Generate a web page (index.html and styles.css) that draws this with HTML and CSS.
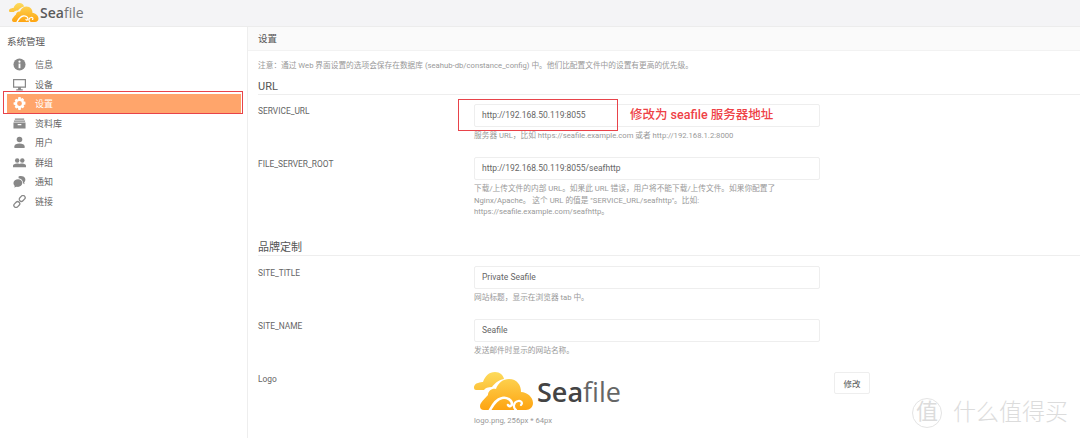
FILE: index.html
```html
<!DOCTYPE html>
<html lang="zh">
<head>
  <meta charset="UTF-8">
  <title>设置 - Seafile</title>
  <link rel="stylesheet" href="styles.css">
</head>
<body>
  <svg class="defs" width="0" height="0">
    <defs>
      <linearGradient id="cloud-back" x1="0" y1="0" x2="0" y2="1">
        <stop offset="0" stop-color="#fddb5c"/>
        <stop offset="1" stop-color="#fcc23a"/>
      </linearGradient>
      <linearGradient id="cloud-main" x1="0" y1="0" x2="0" y2="1">
        <stop offset="0" stop-color="#fdd04d"/>
        <stop offset="1" stop-color="#fea411"/>
      </linearGradient>
      <symbol id="cloud" viewBox="0 0 60 38">
        <path fill="url(#cloud-back)" d="M2 18C-1 18 -1 12 4 11C6 10 8 10 9 10C11 4 15 0 21 0C26 0 29 3 30 7C24 8 20 12 18 15C14 15 11 16 10 18Z"/>
        <path fill="url(#cloud-main)" d="M10 38C6 38 5 34 7 31C9 28 12 25 14 23C14 19 18 16 22 17C24 11 29 7 35 7C43 7 47 13 47 20C53 20 59 25 59 31C59 35 56 38 52 38Z"/>
        <path fill="none" stroke="#fff" stroke-width="2.6" stroke-linecap="round" d="M16 38C19 33 22 27 28 26C33 25 38 28 38 32C38 34 35 35 34 33"/>
        <path fill="none" stroke="#fff" stroke-width="2.2" stroke-linecap="round" d="M42 38C39 36 39 30 44 29C47 28 49 31 47 33"/>
      </symbol>
    </defs>
  </svg>

  <div class="topbar">
    <svg class="topbar-logo"><use href="#cloud"/></svg>
    <span class="brand-text"><b>Sea</b>file</span>
  </div>

  <div class="main">
    <div class="sidebar">
      <h3 class="side-title">系统管理</h3>
      <ul class="side-nav">
        <li class="side-item">
          <svg class="side-icon" viewBox="0 0 14 14"><circle cx="7" cy="7" r="6.5" fill="#888"/><rect x="6" y="6" width="2" height="5" fill="#fff"/><circle cx="7" cy="4" r="1.2" fill="#fff"/></svg>
          <span>信息</span>
        </li>
        <li class="side-item">
          <svg class="side-icon" viewBox="0 0 14 14"><path fill="#888" d="M0 1H14V10.5H8.5V12H10.5V13.5H3.5V12H5.5V10.5H0ZM1.3 2.3V9.2H12.7V2.3Z" fill-rule="evenodd"/></svg>
          <span>设备</span>
        </li>
        <li class="side-item active">
          <svg class="side-icon" viewBox="0 0 14 14"><path fill="#fff" fill-rule="evenodd" d="M5.8 0H8.2L8.6 2L10.3 1.2L12 2.9L11.2 4.6L13.4 5V8.2L11.4 8.7L12.2 10.4L10.5 12.1L8.7 11.3L8.2 14H5.8L5.3 11.6L3.5 12.4L1.8 10.7L2.7 9L0.6 8.2V5.8L2.6 5.3L1.8 3.5L3.5 1.8L5.3 2.7ZM7 4.4A2.6 2.6 0 1 0 7 9.6A2.6 2.6 0 1 0 7 4.4Z"/></svg>
          <span>设置</span>
        </li>
        <li class="side-item">
          <svg class="side-icon" viewBox="0 0 14 14"><path fill="#888" d="M2 1.5H12V3H2ZM1 3.7H13V5.2H1ZM0.5 6H13.5V12.5H0.5ZM5 7.5V9H9V7.5Z" fill-rule="evenodd"/></svg>
          <span>资料库</span>
        </li>
        <li class="side-item">
          <svg class="side-icon" viewBox="0 0 14 14"><circle cx="7" cy="3.8" r="3" fill="#888"/><path fill="#888" d="M1.5 13V11C1.5 9 4 8 7 8C10 8 12.5 9 12.5 11V13Z"/></svg>
          <span>用户</span>
        </li>
        <li class="side-item">
          <svg class="side-icon" viewBox="0 0 14 14"><circle cx="4.5" cy="4.8" r="2.4" fill="#888"/><circle cx="10" cy="4.8" r="2.4" fill="#888"/><path fill="#888" d="M0 12V10.5C0 9 2 8 4.5 8C6 8 6.8 8.3 7.2 8.6C7.8 8.3 8.6 8 10 8C12 8 14 9 14 10.5V12Z"/></svg>
          <span>群组</span>
        </li>
        <li class="side-item">
          <svg class="side-icon" viewBox="0 0 14 14"><path fill="#888" d="M5.5 4.5C3 4.5 0.5 6 0.5 8.7C0.5 10.2 1.2 11.2 2 11.8L1.2 13.5L4 12.7C7 13.4 10 11.5 10 8.7C10 6.3 8 4.5 5.5 4.5Z"/><path fill="#888" d="M6 1.5C8.5 0.5 12 1 13 3.5C13.7 5.2 13.2 7 12 8L12.6 10L10.8 8.9C10.8 6 8.8 3.8 6 3.6Z"/></svg>
          <span>通知</span>
        </li>
        <li class="side-item">
          <svg class="side-icon" viewBox="0 0 14 14"><g fill="none" stroke="#888" stroke-width="1.4"><rect x="6.4" y="1.4" width="7" height="4.6" rx="2.3" transform="rotate(-45 9.9 3.7)"/><rect x="0.6" y="8" width="7" height="4.6" rx="2.3" transform="rotate(-45 4.1 10.3)"/></g></svg>
          <span>链接</span>
        </li>
      </ul>
    </div>

    <div class="content">
      <div class="page-title">设置</div>
      <div class="page-body">
        <p class="notice">注意：通过 Web 界面设置的选项会保存在数据库 (seahub-db/constance_config) 中。他们比配置文件中的设置有更高的优先级。</p>

        <h4 class="section-head section-url">URL</h4>
        <div class="field-row row-service">
          <label class="field-label">SERVICE_URL</label>
          <div class="field-main">
            <div class="text-input">http://192.168.50.119:8055</div>
            <p class="help">服务器 URL，比如 https://seafile.example.com 或者 http://192.168.1.2:8000</p>
          </div>
        </div>
        <div class="field-row row-root">
          <label class="field-label">FILE_SERVER_ROOT</label>
          <div class="field-main">
            <div class="text-input">http://192.168.50.119:8055/seafhttp</div>
            <p class="help help-wide">下载/上传文件的内部 URL。如果此 URL 错误，用户将不能下载/上传文件。如果你配置了 Nginx/Apache。 这个 URL 的值是 "SERVICE_URL/seafhttp"。比如: https://seafile.example.com/seafhttp。</p>
          </div>
        </div>

        <h4 class="section-head section-brand">品牌定制</h4>
        <div class="field-row row-title">
          <label class="field-label">SITE_TITLE</label>
          <div class="field-main">
            <div class="text-input">Private Seafile</div>
            <p class="help">网站标题，显示在浏览器 tab 中。</p>
          </div>
        </div>
        <div class="field-row row-name">
          <label class="field-label">SITE_NAME</label>
          <div class="field-main">
            <div class="text-input">Seafile</div>
            <p class="help">发送邮件时显示的网站名称。</p>
          </div>
        </div>
        <div class="field-row row-logo">
          <label class="field-label">Logo</label>
          <div class="field-main">
            <div class="logo-preview">
              <svg class="logo-cloud"><use href="#cloud"/></svg>
              <span class="logo-text"><b>Sea</b>file</span>
            </div>
            <p class="help">logo.png, 256px * 64px</p>
          </div>
          <button class="btn">修改</button>
        </div>
      </div>
    </div>
  </div>

  <!-- 截图上的标注 -->
  <div class="mark mark-nav"></div>
  <div class="mark mark-input"></div>
  <div class="mark-note">修改为 seafile 服务器地址</div>

  <div class="watermark">
    <span class="wm-badge">值</span>
    <span class="wm-text">什么值得买</span>
  </div>
</body>
</html>
```

FILE: styles.css
```css
* {
  box-sizing: border-box;
}
html, body {
  height: 100%;
}
body {
  position: relative;
  margin: 0;
  overflow: hidden;
  background-color: #fff;
  color: #666;
  font-family: Roboto, "Noto Sans CJK SC", sans-serif;
  font-size: 9px;
}
.defs {
  position: absolute;
}
.topbar {
  display: flex;
  align-items: center;
  height: 27px;
  padding-left: 9px;
  background-color: #f4f4f6;
  border-bottom: 1px solid #ececec;
}
.topbar-logo {
  width: 30px;
  height: 19px;
  margin-top: -1px;
}
.brand-text {
  margin-left: 1px;
  font-family: "Open Sans", sans-serif;
  font-size: 14px;
  line-height: 20px;
  color: #777;
}
.brand-text b {
  font-weight: 600;
  color: #5a5a5a;
}
.main {
  display: flex;
  height: 411px;
}
.sidebar {
  width: 248px;
  flex: none;
  border-right: 1px solid #eee;
}
.side-title {
  margin: 8px 0 7px 7px;
  font-size: 9.5px;
  line-height: 13px;
  font-weight: 400;
  color: #555;
}
.side-nav {
  margin: 0;
  padding: 0;
  list-style: none;
}
.side-item {
  display: flex;
  align-items: center;
  width: 234px;
  height: 19.5px;
  margin-left: 7px;
  padding-left: 6px;
  color: #666;
}
.side-item.active {
  background-color: #ffa56b;
  color: #fff;
}
.side-icon {
  width: 13px;
  height: 13px;
  margin-right: 9px;
  flex: none;
}
.content {
  flex: 1;
}
.page-title {
  height: 24px;
  padding-left: 10px;
  background-color: #fafafa;
  border-bottom: 1px solid #f2f2f2;
  font-size: 9.5px;
  line-height: 23px;
  color: #555;
}
.page-body {
  padding-left: 10px;
}
.notice {
  margin: 9px 0 0;
  font-size: 7.7px;
  line-height: 12px;
  color: #999;
}
.section-head {
  margin: 0;
  border-bottom: 1px solid #eee;
  font-size: 11px;
  line-height: 14px;
  font-weight: 400;
  color: #555;
}
.section-url {
  margin-top: 8px;
}
.section-brand {
  margin-top: 23px;
}
.field-row {
  display: flex;
  align-items: flex-start;
}
.row-service {
  margin-top: 9px;
}
.row-root {
  margin-top: 15.5px;
}
.row-title {
  margin-top: 10px;
}
.row-name {
  margin-top: 15.5px;
}
.row-logo {
  margin-top: 15.5px;
}
.field-label {
  width: 216px;
  flex: none;
  padding-top: 1px;
  font-size: 8.4px;
  line-height: 12px;
  color: #666;
}
.field-main {
  width: 346px;
  flex: none;
}
.text-input {
  height: 23px;
  padding: 0 7px;
  background-color: #fff;
  border: 1px solid #eee;
  border-radius: 2px;
  font-size: 8.5px;
  line-height: 21px;
  color: #666;
}
.help {
  margin: 3px 0 0;
  font-size: 7.7px;
  line-height: 11.5px;
  color: #999;
}
.help-wide {
  width: 310px;
}
.logo-preview {
  display: flex;
  align-items: flex-start;
  height: 40px;
}
.logo-cloud {
  width: 60px;
  height: 38px;
  flex: none;
}
.logo-text {
  margin-left: 3px;
  font-family: "Open Sans", sans-serif;
  font-size: 27px;
  line-height: 40px;
  color: #666;
}
.logo-text b {
  font-weight: 600;
  color: #444;
}
.btn {
  width: 36px;
  height: 22px;
  margin-left: 14px;
  padding: 0;
  background-color: #fff;
  border: 1px solid #eee;
  border-radius: 2px;
  font-family: inherit;
  font-size: 8.5px;
  color: #555;
}
.mark {
  position: absolute;
  border: 1.5px solid #e8434a;
}
.mark-nav {
  top: 91px;
  left: 3px;
  width: 240px;
  height: 23px;
}
.mark-input {
  top: 99px;
  left: 458px;
  width: 160px;
  height: 32px;
}
.mark-note {
  position: absolute;
  top: 106px;
  left: 630px;
  font-size: 12.5px;
  line-height: 18px;
  font-weight: 500;
  color: #ee4146;
}
.watermark {
  position: absolute;
  top: 398px;
  left: 912px;
  display: flex;
  align-items: center;
  color: #dcdcdc;
}
.wm-badge {
  width: 30px;
  height: 30px;
  border: 1px solid #e4e4e4;
  border-radius: 50%;
  font-size: 22px;
  line-height: 26px;
  text-align: center;
}
.wm-text {
  margin-left: 11px;
  font-size: 23px;
  line-height: 28px;
  font-weight: 300;
}
```
